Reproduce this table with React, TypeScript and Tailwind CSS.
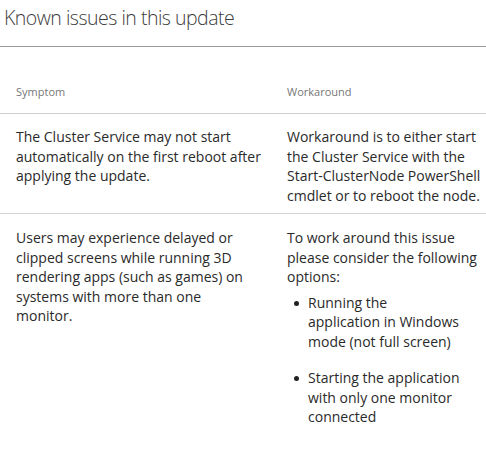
export default function App() {
  const font = { fontFamily: '"Open Sans", "Noto Sans", sans-serif' }
  return (
    <div className="h-[462px] w-[486px] overflow-hidden bg-white text-[#2a2a2a]" style={font}>
      <h2 className="border-b border-[#9a9a9a] px-1 pb-[14px] pt-[4px] text-[19.5px] font-light leading-[28px] tracking-[-0.5px] text-[#3c3c3c]">
        Known issues in this update
      </h2>

      <table className="mt-[37px] w-full table-fixed border-collapse text-left">
        <colgroup>
          <col className="w-[271px]" />
          <col />
        </colgroup>
        <thead>
          <tr className="border-b border-[#cfcfcf]">
            <th className="px-4 pb-[13px] text-[11px] font-normal leading-[16px] text-[#777]">Symptom</th>
            <th className="px-4 pb-[13px] text-[11px] font-normal leading-[16px] text-[#777]">Workaround</th>
          </tr>
        </thead>
        <tbody className="text-[14px] leading-[19.5px]">
          <tr className="border-b border-[#d4d4d4]">
            <td className="pb-[8px] pl-4 pr-1 pt-[13px] align-top">
              The Cluster Service may not start automatically on the first reboot after applying the update.
            </td>
            <td className="pb-[8px] pl-4 pr-0 pt-[13px] align-top">
              Workaround is to either start the Cluster Service with the Start-ClusterNode PowerShell cmdlet or to
              reboot the node.
            </td>
          </tr>
          <tr>
            <td className="pl-4 pr-4 pt-[14px] align-top">
              Users may experience delayed or clipped screens while running 3D rendering apps (such as games) on
              systems with more than one monitor.
            </td>
            <td className="pl-4 pr-0 pt-[14px] align-top">
              <p>To work around this issue please consider the following options:</p>
              <ul className="mt-[6px] flex flex-col gap-[17px]">
                <li className="flex gap-[9px] pl-[7px]">
                  <span className="mt-[8px] h-[5px] w-[5px] shrink-0 rounded-full bg-[#222]" />
                  <span className="pr-6">Running the application in Windows mode (not full screen)</span>
                </li>
                <li className="flex gap-[9px] pl-[7px]">
                  <span className="mt-[8px] h-[5px] w-[5px] shrink-0 rounded-full bg-[#222]" />
                  <span>Starting the application with only one monitor connected</span>
                </li>
              </ul>
            </td>
          </tr>
        </tbody>
      </table>
    </div>
  )
}
